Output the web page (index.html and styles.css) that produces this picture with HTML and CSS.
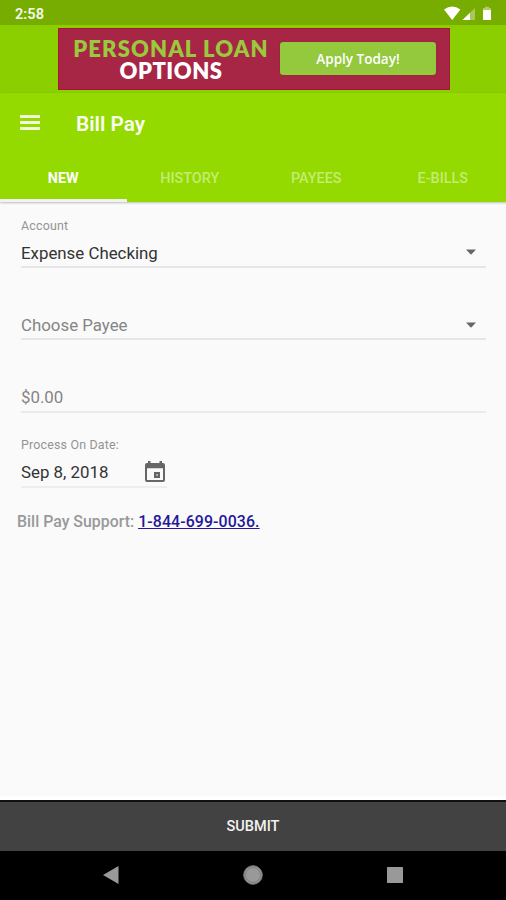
FILE: index.html
```html
<!DOCTYPE html>
<html lang="en">
<head>
<meta charset="utf-8">
<title>Bill Pay</title>
<link rel="stylesheet" href="styles.css">
</head>
<body>
<div class="screen">
  <div class="status">
    <span class="clock">2:58</span>
    <svg class="status-icons" width="50" height="16" viewBox="0 0 50 16">
      <path d="M0 3.6Q8.2-2.4 16.4 3.6L8.2 14Z" fill="#fff"/>
      <path d="M18.5 14L31 2V14Z" fill="#fff" opacity=".35"/>
      <path d="M18.5 14L26 6.8V14Z" fill="#fff"/>
      <path d="M39 4V2H41V.8H45V2H47V4Z" fill="#fff" opacity=".4"/>
      <rect x="39" y="4" width="8" height="10" rx=".6" fill="#fff"/>
    </svg>
  </div>
  <div class="ad-row">
    <div class="ad">
      <div class="ad-copy"><span class="ad-top">PERSONAL LOAN</span><span class="ad-bottom">OPTIONS</span></div>
      <div class="ad-button"><span>Apply Today!</span></div>
    </div>
  </div>
  <header class="header">
    <div class="toolbar">
      <div class="menu"><i></i><i></i><i></i></div>
      <h1>Bill Pay</h1>
    </div>
    <nav class="tabs">
      <div class="tab active">NEW</div>
      <div class="tab">HISTORY</div>
      <div class="tab">PAYEES</div>
      <div class="tab">E-BILLS</div>
    </nav>
  </header>
  <main class="form">
    <div class="field account">
      <div class="label">Account</div>
      <div class="value"><span>Expense Checking</span><svg class="caret" width="10" height="6"><path d="M0 .4H10L5 5.8Z" fill="#666"/></svg></div>
    </div>
    <div class="field payee">
      <div class="value muted"><span>Choose Payee</span><svg class="caret" width="10" height="6"><path d="M0 .4H10L5 5.8Z" fill="#666"/></svg></div>
    </div>
    <div class="field amount">
      <div class="value muted"><span>$0.00</span></div>
    </div>
    <div class="field date">
      <div class="label">Process On Date:</div>
      <div class="value"><span>Sep 8, 2018</span>
        <svg class="calendar" width="20" height="22" viewBox="0 0 20 22"><path fill="#666" fill-rule="evenodd" d="M3 0H5.5V2H14.5V0H17V2H18Q20 2 20 4V19Q20 21 18 21H2Q0 21 0 19V4Q0 2 2 2H3ZM2 7.3V19H18V7.3Z"/><rect x="9" y="11" width="6" height="6" fill="#666"/><rect x="11" y="13" width="2" height="2" fill="#aaa"/></svg>
      </div>
    </div>
    <div class="support"><span class="support-label">Bill Pay Support:</span> <a class="phone">1-844-699-0036.</a></div>
  </main>
  <div class="submit">SUBMIT</div>
  <div class="system-nav">
    <svg width="16" height="18"><path d="M0 9L15.5 0V18Z" fill="#999"/></svg>
    <svg width="20" height="20"><circle cx="10" cy="10" r="9.3" fill="#999" stroke="#777" stroke-width="1"/><circle cx="10" cy="10" r="7.5" fill="none" stroke="#777" stroke-width=".8"/></svg>
    <svg width="16" height="16"><rect width="16" height="16" rx=".5" fill="#999"/></svg>
  </div>
</div>
</body>
</html>
```

FILE: styles.css
```css
* { box-sizing: border-box; }
body { margin: 0; font-family: Roboto, "Liberation Sans", sans-serif; }
svg { display: block; flex: none; }
span, a { white-space: nowrap; }
.screen { width: 506px; height: 900px; display: flex; flex-direction: column; background: #fafafa; overflow: hidden; }
.status { height: 25px; flex: none; background: #77ad00; display: flex; align-items: flex-start; justify-content: space-between; padding: 6px 15px 0 15px; }
.clock { color: #fff; font-size: 14.6px; line-height: 17px; font-weight: 600; opacity: .92; }
.status-icons { margin-right: -3px; }
.ad-row { height: 68px; flex: none; background: #8ccf00; padding: 3px 56px 0 58px; }
.ad { height: 62px; background: #a82645; border: 1px solid #ab1438; display: flex; }
.ad-copy { width: 221px; flex: none; display: flex; flex-direction: column; align-items: center; padding: 8px 0 0 3px; font-family: Lato, sans-serif; font-weight: 800; }
.ad-top { color: #99c93c; font-size: 22px; line-height: 23px; letter-spacing: 1.1px; }
.ad-bottom { color: #fff; font-size: 22px; line-height: 21px; letter-spacing: .5px; }
.ad-button { width: 156px; height: 33px; margin: 13px 0 0 0; border-radius: 3px; background: #94c83d; box-shadow: 0 0 2px #8b1c3a; color: #fff; font: 600 13.5px/34px "Open Sans", sans-serif; text-align: center; }
.header { height: 109px; flex: none; background: #94d900; box-shadow: 0 1px 2px rgba(0,0,0,.25); }
.toolbar { height: 61px; display: flex; align-items: center; padding-left: 20px; }
.menu { width: 20px; height: 15px; display: flex; flex-direction: column; justify-content: space-between; margin: -2px 36px 0 0; }
.menu i { height: 3px; background: #f1fbdc; }
h1 { margin: 0; color: #fafff0; font-size: 20.8px; line-height: 26px; font-weight: 600; }
.tabs { display: grid; grid-template-columns: repeat(4, 1fr); grid-template-rows: 48px; height: 48px; }
.tab { text-align: center; font-size: 14.4px; line-height: 50px; font-weight: 500; color: #c4ec74; }
.active { color: #fff; font-weight: 700; border-bottom: 3px solid #f2f2f2; }
.form { height: 598px; flex: none; padding: 15px 20px 0 21px; border-bottom: 4px solid #fff; }
.field { border-bottom: 2px solid #e6e6e6; }
.label { font-size: 12.4px; line-height: 17px; color: #949494; letter-spacing: .2px; }
.value { display: flex; align-items: center; justify-content: space-between; font-size: 16.85px; line-height: 20px; color: #333; }
.muted { color: #858585; }
.caret { margin: -2px 10px 0 0; }
.account { height: 51px; }
.account .value { margin-top: 9px; }
.payee { height: 72px; padding-top: 47px; }
.payee .caret { margin-top: -1px; }
.amount { height: 73px; padding-top: 47px; border-color: #eaeaea; }
.date { width: 146px; height: 75px; padding-top: 23px; border-color: #eee; }
.date .value { height: 22px; margin-top: 8px; }
.calendar { margin-right: 2px; }
.support { margin: 24px 0 0 -4px; font-size: 15.9px; line-height: 20px; font-weight: 500; color: #999; }
.phone { color: #24189a; text-decoration: underline; letter-spacing: .1px; }
.submit { height: 51px; flex: none; background: #424242; border-top: 2px solid #101010; color: #f2f2f2; text-align: center; font-size: 14.5px; line-height: 49px; font-weight: 500; }
.system-nav { height: 49px; flex: none; background: #000; display: flex; align-items: center; justify-content: space-between; padding: 0 103px 1px; }
```
